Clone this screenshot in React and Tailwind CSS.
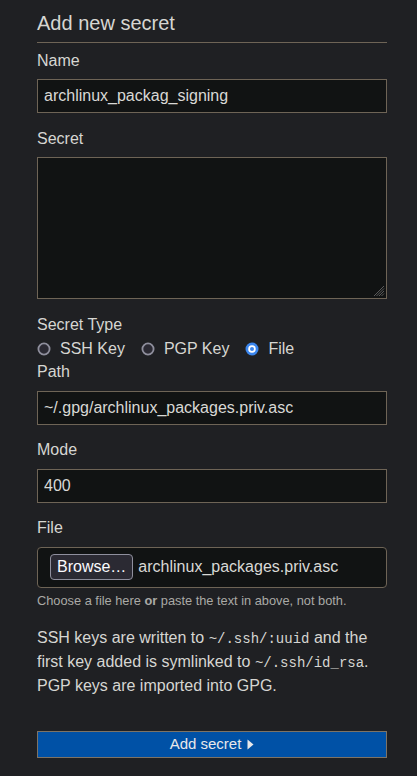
import React from 'react';

const inputCls =
  'block w-full h-[34px] px-[6px] bg-[#111313] border border-[#6e6456] text-[#d9d9d6] text-[16px] outline-none';

const Radio = ({ checked, label }) => (
  <label className="flex items-center">
    {checked ? (
      <svg width="14" height="14" viewBox="0 0 14 14" className="shrink-0">
        <circle cx="7" cy="7" r="6.5" fill="#3b86ee" />
        <circle cx="7" cy="7" r="3.8" fill="#ffffff" />
        <circle cx="7" cy="7" r="2" fill="#3b86ee" />
      </svg>
    ) : (
      <svg width="14" height="14" viewBox="0 0 14 14" className="shrink-0">
        <circle cx="7" cy="7" r="5.6" fill="#2b2a33" stroke="#8f8f9d" strokeWidth="1.8" />
      </svg>
    )}
    <span className="ml-[9px]">{label}</span>
  </label>
);

const App = () => {
  return (
    <div className="min-h-screen bg-[#1f2023] text-[#d6d6d2] font-['Liberation_Sans',Arial,sans-serif] text-[16px] leading-6">
      <form className="ml-[37px] w-[350px] pt-[11px] pb-[18px]" onSubmit={(e) => e.preventDefault()}>
        <h2 className="text-[20px] leading-6 pb-[7px] border-b border-[#6e6456]">Add new secret</h2>

        <label className="block mt-[5.5px]">Name</label>
        <input className={`${inputCls} mt-[6.5px]`} defaultValue="archlinux_packag_signing" />

        <label className="block mt-[13.5px]">Secret</label>
        <div className="relative mt-[6.5px]">
          <textarea className="block w-full h-[142px] p-[6px] bg-[#111313] border border-[#6e6456] text-[#d9d9d6] resize-none outline-none" />
          <svg width="12" height="12" viewBox="0 0 12 12" className="absolute right-[2px] bottom-[2px]">
            <path d="M11 1L1 11M11 3.5L3.5 11M11 6L6 11M11 8.5L8.5 11" stroke="#5a5a5a" strokeWidth="1" />
          </svg>
        </div>

        <label className="block mt-[13.5px]">Secret Type</label>
        <div className="flex items-center h-6 gap-[16px]">
          <Radio label="SSH Key" />
          <Radio label="PGP Key" />
          <Radio checked label="File" />
        </div>

        <label className="block -mt-[0.5px]">Path</label>
        <input className={`${inputCls} mt-[6.5px]`} defaultValue="~/.gpg/archlinux_packages.priv.asc" />

        <label className="block mt-[13.5px]">Mode</label>
        <input className={`${inputCls} mt-[6.5px]`} defaultValue="400" />

        <label className="block mt-[13.5px]">File</label>
        <div className="mt-[6.5px] h-[41px] flex items-center pl-[12px] bg-[#111313] border border-[#6e6456] rounded-[4px] text-[#d9d9d6]">
          <span className="h-[26px] flex items-center px-[6px] bg-[#2b2a33] border border-[#8f8f9d] rounded-[4px] text-[#fbfbfe]">
            Browse…
          </span>
          <span className="ml-[5px]">archlinux_packages.priv.asc</span>
        </div>
        <p className="mt-[3px] text-[12.8px] leading-[19px] text-[#aaaaa6]">
          Choose a file here <b>or</b> paste the text in above, not both.
        </p>

        <p className="mt-[16px]">
          SSH keys are written to{' '}
          <code className="font-['Liberation_Mono',monospace] text-[14px] leading-none">~/.ssh/:uuid</code> and the
          first key added is symlinked to{' '}
          <code className="font-['Liberation_Mono',monospace] text-[14px] leading-none">~/.ssh/id_rsa</code>. PGP
          keys are imported into GPG.
        </p>

        <button
          type="submit"
          className="mt-[33px] w-full h-[27px] flex items-center justify-center gap-[6px] bg-[#0051a6] border border-[#7d7365] text-[#e8e8ea] text-[15px]"
        >
          Add secret
          <svg width="7" height="11" viewBox="0 0 7 11">
            <path d="M0.5 0.5L6.5 5.5L0.5 10.5Z" fill="#e8e8ea" />
          </svg>
        </button>
      </form>
    </div>
  );
};

export default App;
